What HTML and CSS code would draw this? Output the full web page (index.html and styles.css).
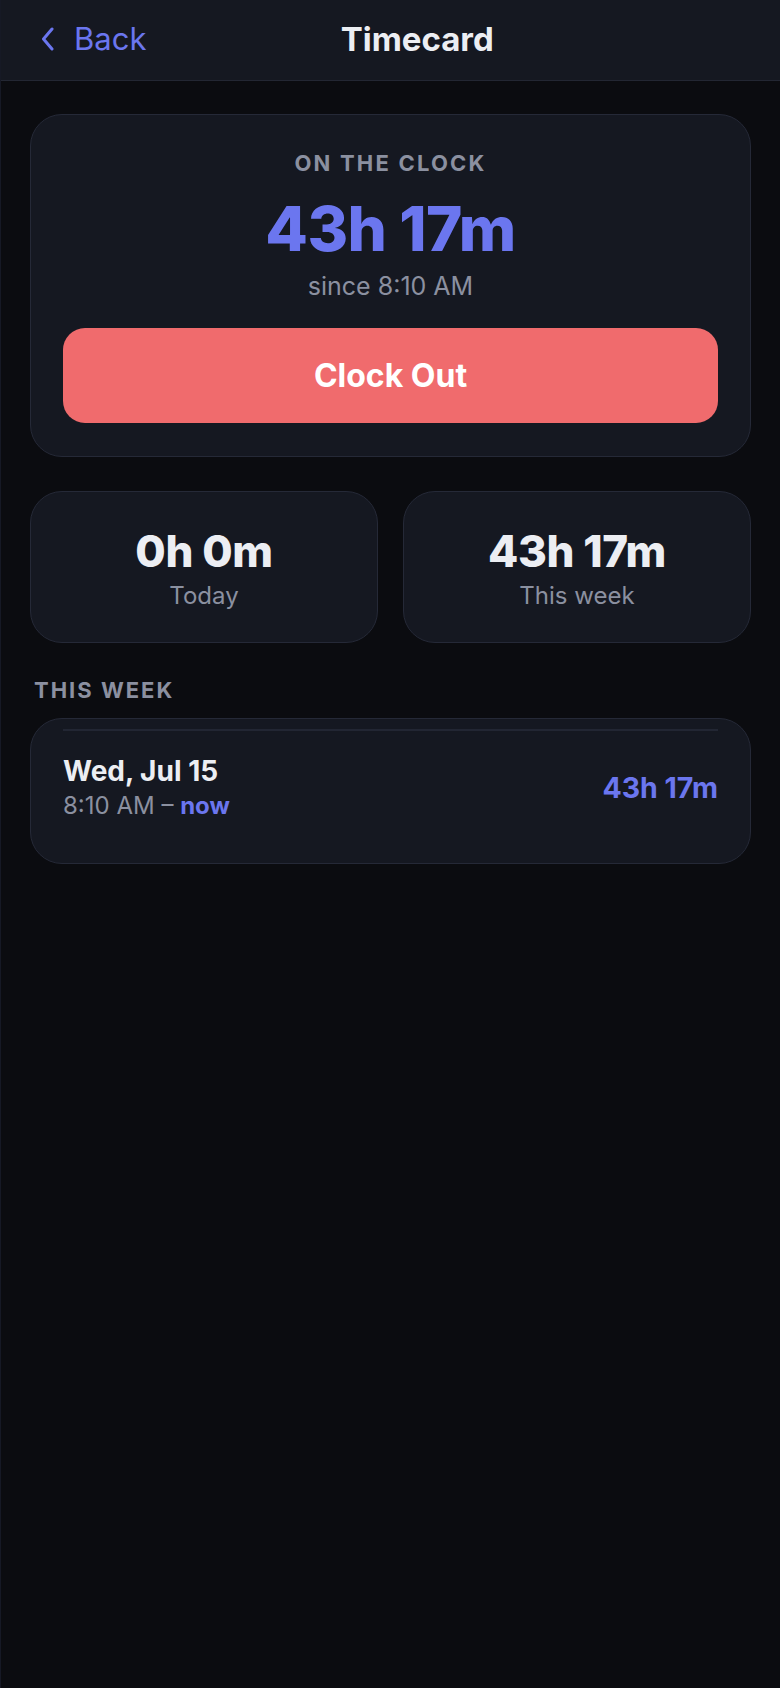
FILE: index.html
```html
<!DOCTYPE html>
<html lang="en">
<head>
  <meta charset="UTF-8" />
  <title>Timecard</title>
  <meta name="viewport" content="width=device-width, initial-scale=1.0" />
  <link rel="stylesheet" href="styles.css">
</head>
<body>

  <header class="nav">
    <a class="back" href="#">
      <svg class="chevron" viewBox="0 0 14 24" width="14" height="24">
        <path d="M11 2 L2.5 12 L11 22" fill="none" stroke="currentColor" stroke-width="3" stroke-linecap="round" stroke-linejoin="round"/>
      </svg>
      <span>Back</span>
    </a>
    <h1>Timecard</h1>
    <span class="nav-spacer"></span>
  </header>

  <main class="content">
    <section class="card clock">
      <div class="eyebrow">ON THE CLOCK</div>
      <div class="elapsed">43h 17m</div>
      <div class="since">since 8:10 AM</div>
      <button class="clock-out">Clock Out</button>
    </section>

    <div class="stats">
      <div class="card stat">
        <div class="stat-value">0h 0m</div>
        <div class="stat-label">Today</div>
      </div>
      <div class="card stat">
        <div class="stat-value">43h 17m</div>
        <div class="stat-label">This week</div>
      </div>
    </div>

    <h2 class="section-title">THIS WEEK</h2>
    <ul class="card entries">
      <li class="entry">
        <div>
          <div class="entry-day">Wed, Jul 15</div>
          <div class="entry-range">8:10 AM – <span class="now">now</span></div>
        </div>
        <div class="entry-total">43h 17m</div>
      </li>
    </ul>
  </main>

</body>
</html>
```

FILE: styles.css
```css
:root {
  --bg: #0b0c10;
  --surface: #151821;
  --border: #252937;
  --text: #eceef3;
  --muted: #8b90a0;
  --accent: #6b76ef;
  --danger: #f06b6d;
}

* {
  box-sizing: border-box;
}

body {
  margin: 0;
  min-height: 1688px;
  background: var(--bg);
  color: var(--text);
  font-family: Inter, 'Noto Sans', 'Liberation Sans', sans-serif;
  border-left: 1px solid #161925;
}

/* nav bar: back link, centred title, spacer on the right */
.nav {
  height: 81px;
  padding: 0 40px;
  background: var(--surface);
  border-bottom: 1px solid #232733;
  display: flex;
  align-items: center;
}

.back {
  display: flex;
  align-items: center;
  gap: 19px;
  color: var(--accent);
  text-decoration: none;
  font-size: 31px;
  padding-bottom: 3px;
}

.chevron {
  display: block;
}

.nav h1 {
  flex: 1;
  margin: 0;
  text-align: center;
  font-size: 33px;
  font-weight: 700;
  padding-bottom: 3px;
}

.nav-spacer {
  width: 52px;
}

.content {
  padding: 33px 29px;
}

.card {
  background: var(--surface);
  border: 1px solid var(--border);
  border-radius: 32px;
}

.clock {
  padding: 35px 32px 33px;
  text-align: center;
}

.eyebrow {
  font-size: 22px;
  font-weight: 700;
  letter-spacing: 2.2px;
  color: var(--muted);
  line-height: 26px;
}

.elapsed {
  margin-top: 15px;
  font-size: 62px;
  font-weight: 800;
  letter-spacing: -0.6px;
  color: var(--accent);
  line-height: 76px;
}

.since {
  margin-top: 4px;
  font-size: 25px;
  color: var(--muted);
  line-height: 30px;
}

.clock-out {
  display: block;
  width: 100%;
  height: 95px;
  margin-top: 27px;
  border: none;
  border-radius: 22px;
  background: var(--danger);
  color: #fff;
  font-family: inherit;
  font-size: 32px;
  font-weight: 700;
}

.stats {
  display: grid;
  grid-template-columns: 1fr 1fr;
  gap: 25px;
  margin-top: 34px;
}

.stat {
  height: 152px;
  display: flex;
  flex-direction: column;
  align-items: center;
  justify-content: center;
  padding-top: 2px;
}

.stat-value {
  font-size: 44px;
  font-weight: 800;
  letter-spacing: -0.4px;
  line-height: 52px;
}

.stat-label {
  margin-top: 4px;
  font-size: 24px;
  color: var(--muted);
  line-height: 30px;
}

.section-title {
  margin: 34px 0 0 4px;
  font-size: 22px;
  font-weight: 700;
  letter-spacing: 2px;
  color: var(--muted);
  line-height: 26px;
}

.entries {
  list-style: none;
  margin: 15px 0 0;
  padding: 10px 32px 0;
}

/* one shift per row, divider above each */
.entry {
  display: flex;
  align-items: center;
  justify-content: space-between;
  border-top: 2px solid #222633;
  padding: 23px 0 42px;
}

.entry-day {
  font-size: 28px;
  font-weight: 700;
  line-height: 34px;
}

.entry-range {
  margin-top: 3px;
  font-size: 24px;
  color: var(--muted);
  line-height: 30px;
}

.now {
  color: var(--accent);
  font-weight: 700;
}

.entry-total {
  font-size: 28.5px;
  font-weight: 700;
  color: var(--accent);
}
```
